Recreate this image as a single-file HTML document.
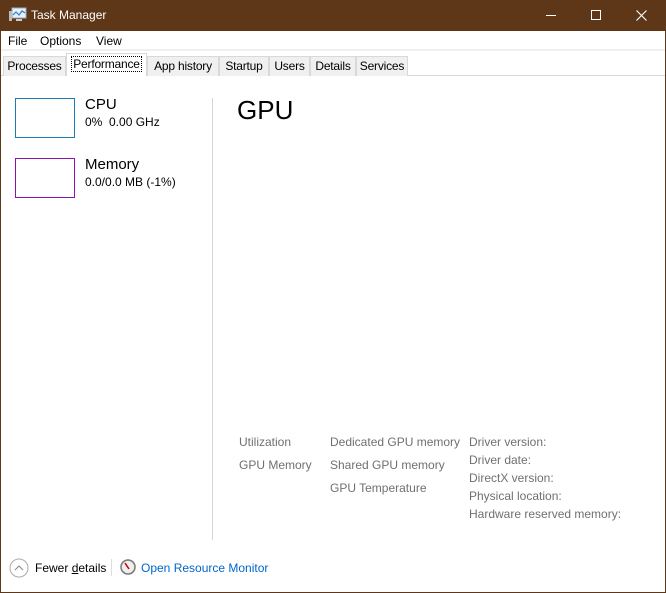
<!DOCTYPE html>
<html><head><style>
*{margin:0;padding:0;box-sizing:border-box}
body{width:666px;height:593px;overflow:hidden;background:#fff;font-family:"Liberation Sans",sans-serif;position:relative}
.a{position:absolute;white-space:nowrap}
#win{position:absolute;left:0;top:0;width:666px;height:593px;border:1px solid #5e3719}
.tab{position:absolute;top:56px;height:20px;background:#f0f0f0;border:1px solid #d9d9d9;border-bottom:none;font-size:12px;color:#000;text-align:center;line-height:18px;letter-spacing:-0.2px}
.lbl{font-size:12px;color:#707070}
</style></head><body>
<div class="a" style="left:0;top:0;width:666px;height:31px;background:#5e3719"></div>
<svg class="a" style="left:9px;top:7px" width="18" height="16" viewBox="0 0 18 16"><rect x="3" y="1" width="14" height="10" fill="#e8f0f8" stroke="#9ab" /><polyline points="4,8 7,5 10,8 13,4 16,6" fill="none" stroke="#2a7fd0" stroke-width="1.2"/><rect x="0" y="4" width="3" height="10" fill="#bbb"/><rect x="7" y="12" width="6" height="2" fill="#ccc"/></svg>
<div class="a" style="left:31px;top:8px;font-size:12px;color:#fff">Task Manager</div>
<div class="a" style="left:546px;top:15px;width:10px;height:1px;background:#fff"></div>
<div class="a" style="left:591px;top:10px;width:10px;height:10px;border:1px solid #fff"></div>
<svg class="a" style="left:636px;top:10px" width="11" height="11"><path d="M0.5 0.5L10.5 10.5M10.5 0.5L0.5 10.5" stroke="#fff" stroke-width="1.1"/></svg>
<div class="a" style="left:8px;top:34px;font-size:12px">File</div>
<div class="a" style="left:40px;top:34px;font-size:12px">Options</div>
<div class="a" style="left:96px;top:34px;font-size:12px">View</div>
<div class="a" style="left:1px;top:49px;width:664px;height:2px;background:#f0f0f0"></div>
<div class="a" style="left:1px;top:75px;width:664px;height:1px;background:#d9d9d9"></div>
<div class="tab" style="left:3px;width:63px">Processes</div>
<div class="tab" style="left:66px;top:53px;height:23px;width:81px;background:#fff;line-height:20px"><span style="border:1px dotted #000;padding:0 1px">Performance</span></div>
<div class="tab" style="left:147px;width:72px">App history</div>
<div class="tab" style="left:219px;width:50px">Startup</div>
<div class="tab" style="left:269px;width:41px">Users</div>
<div class="tab" style="left:310px;width:46px">Details</div>
<div class="tab" style="left:356px;width:52px">Services</div>
<div class="a" style="left:15px;top:98px;width:60px;height:40px;border:1px solid #1c7cb8"></div>
<div class="a" style="left:85px;top:96px;font-size:15px">CPU</div>
<div class="a" style="left:85px;top:115px;font-size:12px">0%&nbsp; 0.00 GHz</div>
<div class="a" style="left:15px;top:158px;width:60px;height:40px;border:1px solid #8b12ae"></div>
<div class="a" style="left:85px;top:156px;font-size:15px">Memory</div>
<div class="a" style="left:85px;top:175px;font-size:12px">0.0/0.0 MB (-1%)</div>
<div class="a" style="left:212px;top:98px;width:1px;height:442px;background:#d6d6d6"></div>
<div class="a" style="left:237px;top:95px;font-size:26px">GPU</div>
<div class="a lbl" style="left:239px;top:435px">Utilization</div>
<div class="a lbl" style="left:239px;top:458px">GPU Memory</div>
<div class="a lbl" style="left:330px;top:435px">Dedicated GPU memory</div>
<div class="a lbl" style="left:330px;top:458px">Shared GPU memory</div>
<div class="a lbl" style="left:330px;top:481px">GPU Temperature</div>
<div class="a lbl" style="left:469px;top:435px">Driver version:</div>
<div class="a lbl" style="left:469px;top:453px">Driver date:</div>
<div class="a lbl" style="left:469px;top:471px">DirectX version:</div>
<div class="a lbl" style="left:469px;top:489px">Physical location:</div>
<div class="a lbl" style="left:469px;top:507px">Hardware reserved memory:</div>
<svg class="a" style="left:9px;top:558px" width="20" height="20"><circle cx="10" cy="10" r="9" fill="none" stroke="#aaa"/><path d="M6 12L10 8L14 12" fill="none" stroke="#888"/></svg>
<div class="a" style="left:35px;top:561px;font-size:12px">Fewer <u>d</u>etails</div>
<div class="a" style="left:111px;top:559px;width:1px;height:17px;background:#ddd"></div>
<svg class="a" style="left:120px;top:559px" width="16" height="16"><circle cx="8" cy="8" r="7" fill="#eee" stroke="#777" stroke-width="1.5"/><path d="M5 4L9 10" stroke="#c00" stroke-width="1.5"/></svg>
<div class="a" style="left:141px;top:561px;font-size:12px;color:#0066cc">Open Resource Monitor</div>
<div id="win"></div>
</body></html>
